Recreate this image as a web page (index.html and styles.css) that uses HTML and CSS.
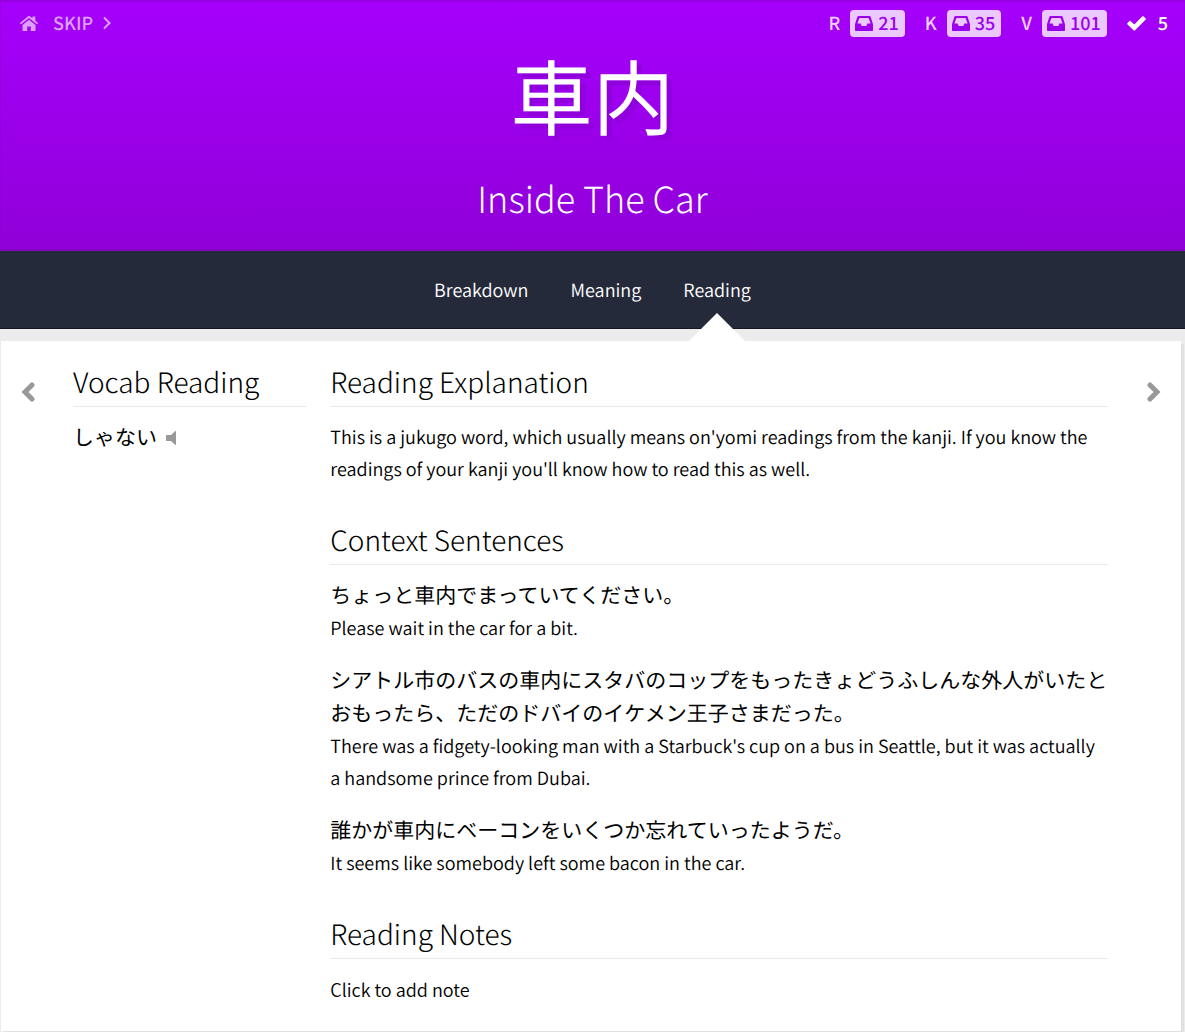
FILE: index.html
```html
<!DOCTYPE html>
<html lang="en">
<head>
<meta charset="utf-8">
<meta name="viewport" content="width=device-width, initial-scale=1">
<title>車内 – Lesson</title>
<link rel="stylesheet" href="styles.css">
</head>
<body>
<svg class="sprite" aria-hidden="true">
  <symbol id="inbox" viewBox="0 0 18 15">
    <path fill-rule="evenodd" d="M3.600 0h10.800c.6 0 1 .3 1.200.8l2.100 6.400c.2.600.3 1 .3 1.500V14c0 .6-.4 1-1 1H1c-.6 0-1-.4-1-1V8.700c0-.5.100-.9.300-1.500L2.400.8C2.600.3 3 0 3.600 0zM4.400 2 2.400 7.500h3.200l1.100 2.500h4.600l1.100-2.500h3.200L13.600 2z"/>
  </symbol>
</svg>
<header class="lesson-header">
  <div class="toolbar">
    <nav class="toolbar-links" aria-label="Lesson">
      <a href="#" aria-label="Home"><svg width="18" height="15" viewBox="0 0 18 15"><path d="M9 3.700 2.500 9v5.400c0 .4.200.6.600.6h4.100v-4.500h3.600V15h4.100c.4 0 .6-.2.600-.6V9z"/><path d="M9 0c-.4 0-.8.100-1.100.400L.2 6.800c-.2.200-.2.400 0 .600l.6.700c.2.200.4.200.6 0L9 1.900l7.600 6.200c.2.200.4.200.6 0l.6-.7c.2-.2.200-.4 0-.6l-2.500-2.100V.900c0-.2-.2-.4-.4-.4h-2c-.2 0-.4.200-.4.400v1.300L10.100.4C9.800.1 9.400 0 9 0z"/></svg></a>
      <a href="#" class="skip">SKIP <svg width="8" height="14" viewBox="0 0 8 14"><path class="stroke" d="M1 1.500 6.500 7 1 12.500"/></svg></a>
    </nav>
    <ul class="stats">
      <li>R <span class="badge"><svg width="18" height="15"><use href="#inbox"/></svg>21</span></li>
      <li>K <span class="badge"><svg width="18" height="15"><use href="#inbox"/></svg>35</span></li>
      <li>V <span class="badge"><svg width="18" height="15"><use href="#inbox"/></svg>101</span></li>
      <li class="done"><svg width="19" height="15" viewBox="0 0 19 15"><path d="M15.200.5c.5-.5 1-.5 1.500 0l1.800 1.700c.5.500.5 1 0 1.500L8 14.300c-.5.500-1 .5-1.500 0L.5 8.500C0 8 0 7.500.5 7l1.800-1.800c.5-.5 1-.5 1.500 0l3.500 3.400z"/></svg>5</li>
    </ul>
  </div>
  <h1 lang="ja">車内</h1>
  <p class="meaning">Inside The Car</p>
</header>
<nav class="tabs" aria-label="Sections">
  <a href="#">Breakdown</a>
  <a href="#">Meaning</a>
  <a href="#" class="active" aria-current="page">Reading</a>
</nav>
<main class="card">
  <button class="arrow" type="button" aria-label="Previous"><svg width="14" height="20" viewBox="0 0 14 20"><path class="thick" d="M11 3 4 10l7 7"/></svg></button>
  <section class="vocab">
    <h2>Vocab Reading</h2>
    <p class="kana"><span lang="ja">しゃない</span><button type="button" class="audio" aria-label="Play audio"><svg width="10" height="14" viewBox="0 0 10 14"><path d="M9 .3c.6-.5 1-.2 1 .4v12.600c0 .6-.4.900-1 .4L5 10H1c-.6 0-1-.4-1-1V5c0-.6.400-1 1-1h4z"/></svg></button></p>
  </section>
  <div class="details">
    <section>
      <h2>Reading Explanation</h2>
      <p>This is a jukugo word, which usually means on'yomi readings from the kanji. If you know the readings of your kanji you'll know how to read this as well.</p>
    </section>
    <section>
      <h2>Context Sentences</h2>
      <div class="sentence"><p lang="ja">ちょっと車内でまっていてください。</p><p>Please wait in the car for a bit.</p></div>
      <div class="sentence"><p lang="ja">シアトル市のバスの車内にスタバのコップをもったきょどうふしんな外人がいたとおもったら、ただのドバイのイケメン王子さまだった。</p><p>There was a fidgety-looking man with a Starbuck's cup on a bus in Seattle, but it was actually a handsome prince from Dubai.</p></div>
      <div class="sentence"><p lang="ja">誰かが車内にベーコンをいくつか忘れていったようだ。</p><p>It seems like somebody left some bacon in the car.</p></div>
    </section>
    <section>
      <h2>Reading Notes</h2>
      <button type="button" class="note">Click to add note</button>
    </section>
  </div>
  <button class="arrow next" type="button" aria-label="Next"><svg width="14" height="20" viewBox="0 0 14 20"><path class="thick" d="m3 3 7 7-7 7"/></svg></button>
</main>
</body>
</html>
```
FILE: styles.css
```css
* { box-sizing: border-box; }
body {
  margin: 0;
  background: #ececec;
  color: #000;
  font: 350 18px/32px "Noto Sans CJK JP", sans-serif;
  text-rendering: geometricPrecision;
}
h1, h2, p, ul { margin: 0; padding: 0; }
a { color: inherit; text-decoration: none; }
button { padding: 0; border: 0; background: none; color: inherit; font: inherit; cursor: pointer; }
svg { fill: currentColor; flex: none; }
.sprite { position: absolute; width: 0; height: 0; }
.stroke, .thick { fill: none; stroke: currentColor; stroke-width: 2; }
.thick { stroke-width: 5; stroke-linecap: round; }

.lesson-header {
  height: 251px;
  background: linear-gradient(#a500fc, #9000d8);
  box-shadow: inset 0 2px 2px #9500e0, inset 0 -2px 2px #8300c4;
  color: #fff;
  text-align: center;
}
.toolbar {
  display: flex;
  justify-content: space-between;
  padding: 8px 17px 0 20px;
  line-height: 30px;
  font-size: 18px;
  font-weight: 500;
}
.toolbar-links, .toolbar-links a, .stats, .stats li, .badge { display: flex; align-items: center; }
.toolbar-links { gap: 15px; color: #dda0fe; }
.skip { gap: 10px; }
.stats { gap: 20px; list-style: none; }
.stats li { gap: 10px; color: #efd0ff; }
.stats .done { color: #fff; gap: 12px; }
.badge {
  gap: 5px;
  height: 27px;
  padding: 0 6px 0 5px;
  border-radius: 4px;
  background: #ebc8ff;
  color: #9c00ee;
}
h1 {
  font-size: 82px;
  font-weight: 400;
  line-height: 112px;
  text-shadow: 5px 5px 0 #9000dc;
}
.meaning { font-size: 36px; font-weight: 300; line-height: 96px; }

.tabs {
  display: flex;
  justify-content: center;
  gap: 42px;
  height: 78px;
  border-bottom: 1px solid #131722;
  background: #252a3b;
  color: #fff;
  line-height: 78px;
}
.active { position: relative; }
.active::after {
  content: "";
  position: absolute;
  top: 62px;
  left: 50%;
  border: solid transparent;
  border-width: 0 28px 28px;
  border-bottom-color: #fff;
  transform: translateX(-50%);
}

.card {
  display: grid;
  grid-template-columns: 72px 3fr 24px 10fr 73px;
  margin: 12px 4px 2px 1px;
  padding: 24px 0 25px;
  background: #fff;
  box-shadow: 3px 3px 0 #e1e1e1;
}
.arrow { display: flex; align-self: start; padding: 17px 20px; color: #999; }
.next { justify-self: end; }
.details { grid-column: 4; }
h2 {
  margin-bottom: 14px;
  padding-bottom: 6px;
  border-bottom: 1px solid #e9e9e9;
  font-size: 28px;
  font-weight: 300;
  line-height: 35px;
}
.details section + section { margin-top: 38px; }
.sentence + .sentence { margin-top: 20px; }
p[lang="ja"], .kana { font-size: 21px; font-weight: 400; line-height: 33px; }
.kana { display: flex; align-items: center; gap: 9px; }
.audio { display: flex; color: #999; }
```
